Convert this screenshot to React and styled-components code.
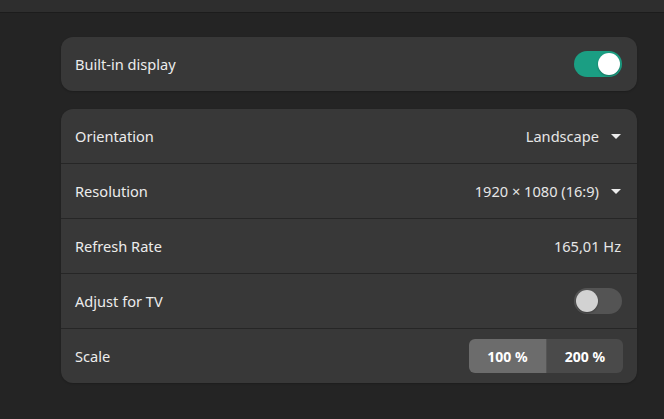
import React, { useState } from "react";
import styled, { createGlobalStyle } from "styled-components";

const GlobalStyle = createGlobalStyle`
  html, body {
    margin: 0;
    padding: 0;
    background: #242424;
  }
  body {
    font-family: "Noto Sans", "Open Sans", sans-serif;
    color: #ececec;
    -webkit-font-smoothing: antialiased;
  }
`;

const Page = styled.div`
  width: 664px;
  height: 419px;
  background: #242424;
  overflow: hidden;
`;

const HeaderBar = styled.div`
  height: 12px;
  background: #2e2e2e;
  border-bottom: 1px solid #1c1c1c;
`;

const Content = styled.div`
  display: flex;
  flex-direction: column;
  gap: 18px;
  padding: 24px 27px 0 61px;
`;

const Card = styled.div`
  background: #383838;
  border-radius: 12px;
  overflow: hidden;
  box-shadow: 0 1px 2px rgba(0, 0, 0, 0.2);
`;

const Row = styled.div`
  height: 54px;
  display: flex;
  align-items: center;
  justify-content: space-between;
  padding: 0 14px 0 14px;
  font-size: 14.6px;
  & + & {
    border-top: 1px solid #262626;
  }
`;

const Label = styled.span`
  color: #ececec;
`;

const Value = styled.span`
  display: flex;
  align-items: center;
  gap: 12px;
  color: #e6e6e6;
  padding-right: 2px;
`;

const Arrow = styled.span`
  width: 0;
  height: 0;
  border-left: 5px solid transparent;
  border-right: 5px solid transparent;
  border-top: 5px solid #ececec;
  margin-top: 1px;
`;

const Switch = styled.button`
  width: 48px;
  height: 26px;
  border-radius: 13px;
  border: none;
  padding: 2px;
  margin-right: 1px;
  display: flex;
  justify-content: ${(p) => (p.$on ? "flex-end" : "flex-start")};
  background: ${(p) => (p.$on ? "#1b9e83" : "#545454")};
  cursor: pointer;
`;

const Knob = styled.span`
  width: 22px;
  height: 22px;
  border-radius: 50%;
  background: ${(p) => (p.$on ? "#ffffff" : "#d2d2d2")};
  box-shadow: 0 1px 2px rgba(0, 0, 0, 0.3);
`;

const Segmented = styled.div`
  display: flex;
  border-radius: 6px;
  overflow: hidden;
  height: 34px;
`;

const Segment = styled.button`
  width: 77px;
  border: none;
  font-family: inherit;
  font-size: 14px;
  font-weight: 700;
  color: #ffffff;
  background: ${(p) => (p.$active ? "#6c6c6c" : "#4a4a4a")};
  & + & {
    border-left: 1px solid #555555;
  }
`;

const Toggle = ({ on, onClick }) => (
  <Switch $on={on} onClick={onClick}>
    <Knob $on={on} />
  </Switch>
);

const App = () => {
  const [builtIn, setBuiltIn] = useState(true);
  const [tv, setTv] = useState(false);
  const [scale, setScale] = useState(100);

  return (
    <Page>
      <GlobalStyle />
      <HeaderBar />
      <Content>
        <Card>
          <Row>
            <Label>Built-in display</Label>
            <Toggle on={builtIn} onClick={() => setBuiltIn(!builtIn)} />
          </Row>
        </Card>
        <Card>
          <Row>
            <Label>Orientation</Label>
            <Value>
              Landscape
              <Arrow />
            </Value>
          </Row>
          <Row>
            <Label>Resolution</Label>
            <Value>
              1920 × 1080 (16:9)
              <Arrow />
            </Value>
          </Row>
          <Row>
            <Label>Refresh Rate</Label>
            <Value>165,01 Hz</Value>
          </Row>
          <Row>
            <Label>Adjust for TV</Label>
            <Toggle on={tv} onClick={() => setTv(!tv)} />
          </Row>
          <Row>
            <Label>Scale</Label>
            <Segmented>
              {[100, 200].map((s) => (
                <Segment key={s} $active={scale === s} onClick={() => setScale(s)}>
                  {s} %
                </Segment>
              ))}
            </Segmented>
          </Row>
        </Card>
      </Content>
    </Page>
  );
};

export default App;
